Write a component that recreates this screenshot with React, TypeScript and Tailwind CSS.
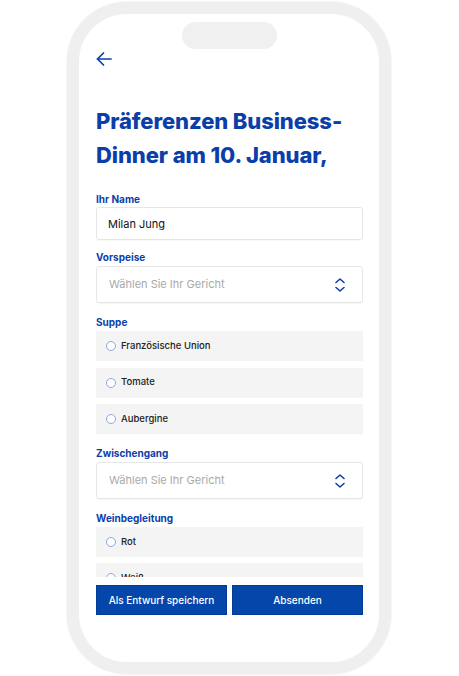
import React, { useState } from 'react';

const font = { fontFamily: 'Inter, "Liberation Sans", sans-serif' };

const BackArrow = () => (
  <svg width="16" height="16" viewBox="0 0 16 16" fill="none" stroke="#0b3ea9" strokeWidth="1.7" strokeLinecap="round" strokeLinejoin="round">
    <path d="M15 8H1.5" />
    <path d="M7.5 2L1.5 8l6 6" />
  </svg>
);

const UpDown = () => (
  <svg width="12" height="16" viewBox="0 0 12 16" fill="none" stroke="#0b3ea9" strokeWidth="1.6" strokeLinecap="round" strokeLinejoin="round">
    <path d="M2 5.5L6 2l4 3.5" />
    <path d="M2 10.5L6 14l4-3.5" />
  </svg>
);

const Label: React.FC<{ children: React.ReactNode }> = ({ children }) => (
  <div className="h-[14px] text-[10px] leading-[14px] font-bold text-[#0b3ea9]">{children}</div>
);

const SelectBox: React.FC<{ value: string; onChange: (v: string) => void }> = ({ value }) => (
  <div className="mt-[2px] h-[37px] flex items-center justify-between rounded-[3px] border border-[#e6e6e6] bg-white pl-[12px] pr-[16px] shadow-[0_1px_1px_rgba(0,0,0,0.03)]">
    <span className={`text-[11px] ${value ? 'text-[#222]' : 'text-[#a9a9a9]'}`}>{value || 'Wählen Sie Ihr Gericht'}</span>
    <UpDown />
  </div>
);

const RadioRow: React.FC<{ label: string; checked: boolean; onClick: () => void }> = ({ label, checked, onClick }) => (
  <button
    type="button"
    onClick={onClick}
    className="h-[30px] w-full shrink-0 flex items-center gap-[5px] bg-[#f4f4f4] pl-[10px] text-left"
  >
    <span className="h-[10px] w-[10px] rounded-full border border-[#8ea7de] bg-white flex items-center justify-center">
      {checked && <span className="h-[5px] w-[5px] rounded-full bg-[#0b3ea9]" />}
    </span>
    <span className="text-[9.5px] font-medium text-[#222]">{label}</span>
  </button>
);

export default function App() {
  const [name, setName] = useState('Milan Jung');
  const [vorspeise, setVorspeise] = useState('');
  const [zwischengang, setZwischengang] = useState('');
  const [suppe, setSuppe] = useState('');
  const [wein, setWein] = useState('');

  return (
    <div className="min-h-screen bg-white flex pl-[67px] pt-[2px]" style={font}>
      <div className="w-[324px] h-[672px] rounded-[60px] border-[12px] border-[#efefef] shadow-[0_0_0_1px_#f6f6f6] bg-white overflow-hidden flex flex-col px-[17px] pr-[16px]">
        <div className="mx-auto mt-[8px] h-[27px] w-[95px] shrink-0 rounded-full bg-[#f0f0f0]" />
        <div className="mt-[2px] h-[16px] shrink-0">
          <BackArrow />
        </div>

        <div className="h-[510px] shrink-0 overflow-hidden flex flex-col">
          <h1 className="mt-[37px] text-[22px] leading-[34px] font-extrabold tracking-[-0.1px] text-[#0b3ea9]">
            Präferenzen Business-
            <br />
            Dinner am 10. Januar,
          </h1>

          <div className="mt-[20px]">
            <Label>Ihr Name</Label>
            <input
              value={name}
              onChange={e => setName(e.target.value)}
              className="mt-[1px] h-[33px] w-full rounded-[3px] border border-[#e6e6e6] px-[11px] text-[11px] text-[#111] outline-none shadow-[0_1px_1px_rgba(0,0,0,0.03)]"
            />
          </div>

          <div className="mt-[10px]">
            <Label>Vorspeise</Label>
            <SelectBox value={vorspeise} onChange={setVorspeise} />
          </div>

          <div className="mt-[12px]">
            <Label>Suppe</Label>
            <div className="mt-[2px] flex flex-col gap-[6.5px]">
              {['Französische Union', 'Tomate', 'Aubergine'].map(s => (
                <RadioRow key={s} label={s} checked={suppe === s} onClick={() => setSuppe(s)} />
              ))}
            </div>
          </div>

          <div className="mt-[12px]">
            <Label>Zwischengang</Label>
            <SelectBox value={zwischengang} onChange={setZwischengang} />
          </div>

          <div className="mt-[12px]">
            <Label>Weinbegleitung</Label>
            <div className="mt-[2px] flex flex-col gap-[6px]">
              {['Rot', 'Weiß'].map(w => (
                <RadioRow key={w} label={w} checked={wein === w} onClick={() => setWein(w)} />
              ))}
            </div>
          </div>
        </div>

        <div className="mt-[8px] grid grid-cols-2 gap-[5px]">
          <button className="h-[30px] bg-[#0546aa] border border-[#043c95] text-white text-[10px] font-medium">
            Als Entwurf speichern
          </button>
          <button className="h-[30px] bg-[#0546aa] border border-[#043c95] text-white text-[10px] font-medium">
            Absenden
          </button>
        </div>
      </div>
    </div>
  );
}
